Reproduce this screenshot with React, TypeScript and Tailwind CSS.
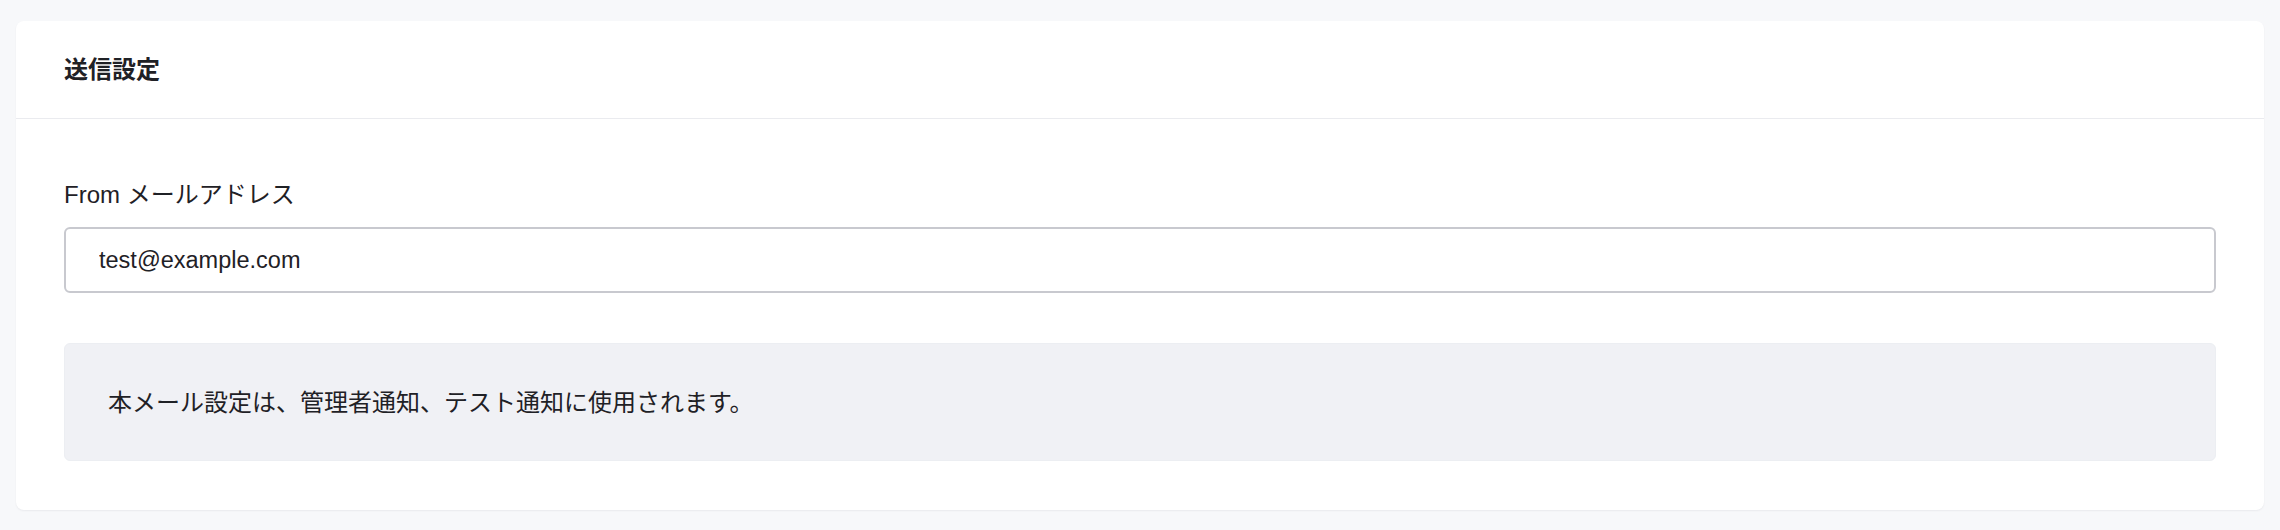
import { useState } from "react";

const FONT = "font-['Liberation_Sans','Noto_Sans_CJK_JP',sans-serif]";

export default function App() {
    const [from, setFrom] = useState("test@example.com");

    return (
        <div className={`min-h-screen bg-[#f7f8fa] px-4 pt-[21px] text-[#1f2126] ${FONT}`}>
            <section className="rounded-[8px] bg-white shadow-[0_1px_2px_rgba(20,24,40,0.06)]">
                {/* Header */}
                <div className="border-b border-[#eaebef] px-12 py-[31px]">
                    <h2 className="text-[24px] font-bold leading-[35px]">送信設定</h2>
                </div>

                {/* Body */}
                <div className="px-12 pt-[62px] pb-[49px]">
                    <label htmlFor="from-address" className="block text-[24px] font-normal leading-[28px]">
                        From メールアドレス
                    </label>
                    <input
                        id="from-address"
                        value={from}
                        onChange={(e) => setFrom(e.target.value)}
                        className="mt-[18px] block h-[66px] w-full rounded-[6px] border-2 border-[#c8c9cf] bg-white px-[33px] text-[23.5px] text-[#1f2126] outline-none"
                    />

                    <div className="mt-[50px] flex h-[118px] items-center rounded-[6px] border border-[#eceef2] bg-[#f0f1f5] px-[43px]">
                        <p className="text-[24px] leading-[35px]">
                            本メール設定は、管理者通知、テスト通知に使用されます。
                        </p>
                    </div>
                </div>
            </section>
        </div>
    );
}
